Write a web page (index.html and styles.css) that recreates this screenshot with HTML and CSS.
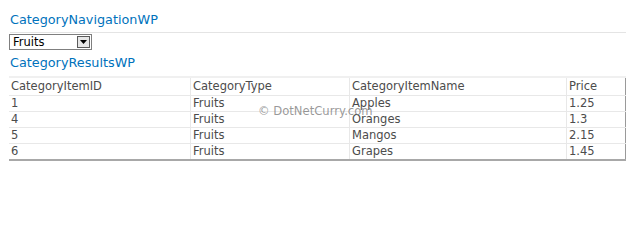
FILE: index.html
```html
<!DOCTYPE html>
<html>
<head>
<meta charset="utf-8">
<link rel="stylesheet" href="styles.css">
</head>
<body>
<div class="page">
  <div class="wp-title">CategoryNavigationWP</div>
  <div class="select">
    <span class="select-text">Fruits</span>
    <span class="select-btn"><svg width="7" height="4" viewBox="0 0 7 4"><path d="M0 0h7L3.5 4z" fill="#000"/></svg></span>
  </div>
  <div class="wp-title second">CategoryResultsWP</div>
  <div class="table-wrap">
    <table class="grid">
      <thead>
        <tr><th class="c1">CategoryItemID</th><th class="c2">CategoryType</th><th class="c3">CategoryItemName</th><th class="c4">Price</th></tr>
      </thead>
      <tbody>
        <tr><td>1</td><td>Fruits</td><td>Apples</td><td>1.25</td></tr>
        <tr><td>4</td><td>Fruits</td><td>Oranges</td><td>1.3</td></tr>
        <tr><td>5</td><td>Fruits</td><td>Mangos</td><td>2.15</td></tr>
        <tr><td>6</td><td>Fruits</td><td>Grapes</td><td>1.45</td></tr>
      </tbody>
    </table>
    <div class="watermark">© DotNetCurry.com</div>
  </div>
</div>
</body>
</html>
```

FILE: styles.css
```css
html, body { margin: 0; padding: 0; background: #fff; }
.page {
  padding: 11px 11px 0 10px;
  font-family: "DejaVu Sans", Verdana, sans-serif;
}
.wp-title {
  color: #0072bc;
  font-size: 12.8px;
  line-height: 18px;
  padding-bottom: 3px;
  border-bottom: 1px solid #e4e4e4;
}
.wp-title.second {
  border-bottom: none;
  margin-top: 4px;
  padding-bottom: 4px;
}
.select {
  display: flex;
  align-items: center;
  width: 81px;
  height: 14px;
  margin: 1px 0 0 -1px;
  border: 1px solid #7f7f7f;
  background: #fff;
}
.select-text {
  flex: 1;
  font-size: 11.5px;
  color: #000;
  padding-left: 3px;
  line-height: 14px;
}
.select-btn {
  display: flex;
  align-items: center;
  justify-content: center;
  width: 13px;
  height: 12px;
  margin-right: 1px;
  background: #e6e6e6;
  border: 1px solid #5a5a5a;
  box-sizing: border-box;
}
.table-wrap {
  position: relative;
  margin-left: -1px;
}
.grid {
  width: 100%;
  border-collapse: collapse;
  font-size: 11.5px;
  color: #4c4c4c;
  border-top: 2px solid #f0f0f0;
  border-right: 1px solid #9a9a9a;
  border-bottom: 2px solid #a8a8a8;
}
.grid th, .grid td {
  text-align: left;
  font-weight: normal;
  padding: 0 2px;
  height: 15px;
  line-height: 15px;
  border-bottom: 1px solid #e8e8e8;
  border-left: 1px solid #e8e8e8;
  white-space: nowrap;
}
.grid th { height: 17px; line-height: 17px; }
.grid tr > :first-child { border-left: none; }
.c1 { width: 177px; }
.c2 { width: 154px; }
.c3 { width: 212px; }
.watermark {
  position: absolute;
  left: 249px;
  top: 28px;
  font-size: 11.6px;
  color: rgba(120,120,120,0.75);
  font-family: "DejaVu Sans", sans-serif;
  pointer-events: none;
}
```
